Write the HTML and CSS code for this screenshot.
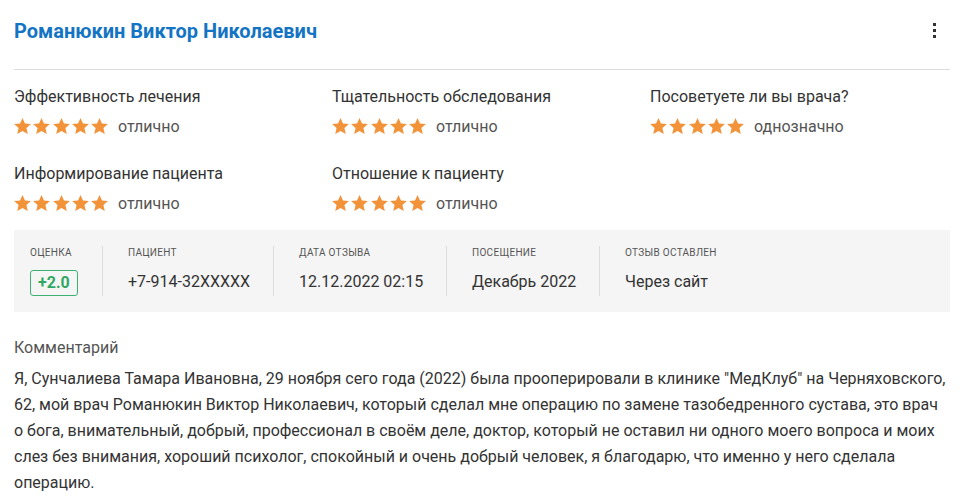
FILE: index.html
```html
<!DOCTYPE html>
<html lang="ru">
<head>
<meta charset="utf-8">
<link rel="stylesheet" href="styles.css">
</head>
<body>
<svg width="0" height="0" class="defs">
  <defs>
    <symbol id="star" viewBox="1.5 1.8 21 20">
      <path d="M12 1.8l3.1 6.9 7.4.7-5.6 5 1.7 7.4L12 17.9l-6.6 3.9 1.7-7.4-5.6-5 7.4-.7z"/>
    </symbol>
  </defs>
</svg>
<div class="review">
  <div class="header">
    <h1 class="name">Романюкин Виктор Николаевич</h1>
    <div class="kebab"><span></span><span></span><span></span></div>
  </div>

  <div class="ratings">
    <div class="rating">
      <div class="rating-label">Эффективность лечения</div>
      <div class="rating-value">
        <span class="stars"><svg><use href="#star"/></svg><svg><use href="#star"/></svg><svg><use href="#star"/></svg><svg><use href="#star"/></svg><svg><use href="#star"/></svg></span>
        <span class="rating-text">отлично</span>
      </div>
    </div>
    <div class="rating">
      <div class="rating-label">Тщательность обследования</div>
      <div class="rating-value">
        <span class="stars"><svg><use href="#star"/></svg><svg><use href="#star"/></svg><svg><use href="#star"/></svg><svg><use href="#star"/></svg><svg><use href="#star"/></svg></span>
        <span class="rating-text">отлично</span>
      </div>
    </div>
    <div class="rating">
      <div class="rating-label">Посоветуете ли вы врача?</div>
      <div class="rating-value">
        <span class="stars"><svg><use href="#star"/></svg><svg><use href="#star"/></svg><svg><use href="#star"/></svg><svg><use href="#star"/></svg><svg><use href="#star"/></svg></span>
        <span class="rating-text">однозначно</span>
      </div>
    </div>
    <div class="rating">
      <div class="rating-label">Информирование пациента</div>
      <div class="rating-value">
        <span class="stars"><svg><use href="#star"/></svg><svg><use href="#star"/></svg><svg><use href="#star"/></svg><svg><use href="#star"/></svg><svg><use href="#star"/></svg></span>
        <span class="rating-text">отлично</span>
      </div>
    </div>
    <div class="rating">
      <div class="rating-label">Отношение к пациенту</div>
      <div class="rating-value">
        <span class="stars"><svg><use href="#star"/></svg><svg><use href="#star"/></svg><svg><use href="#star"/></svg><svg><use href="#star"/></svg><svg><use href="#star"/></svg></span>
        <span class="rating-text">отлично</span>
      </div>
    </div>
  </div>

  <div class="info">
    <div class="info-item w1">
      <div class="info-label">Оценка</div>
      <div class="info-value"><span class="score">+2.0</span></div>
    </div>
    <div class="info-item w2">
      <div class="info-label">Пациент</div>
      <div class="info-value">+7-914-32XXXXX</div>
    </div>
    <div class="info-item w3">
      <div class="info-label">Дата отзыва</div>
      <div class="info-value">12.12.2022 02:15</div>
    </div>
    <div class="info-item w4">
      <div class="info-label">Посещение</div>
      <div class="info-value">Декабрь 2022</div>
    </div>
    <div class="info-item last">
      <div class="info-label">Отзыв оставлен</div>
      <div class="info-value">Через сайт</div>
    </div>
  </div>

  <div class="comment">
    <div class="comment-label">Комментарий</div>
    <p class="comment-text">Я, Сунчалиева Тамара Ивановна, 29 ноября сего года (2022) была прооперировали в клинике "МедКлуб" на Черняховского, 62, мой врач Романюкин Виктор Николаевич, который сделал мне операцию по замене тазобедренного сустава, это врач о бога, внимательный, добрый, профессионал в своём деле, доктор, который не оставил ни одного моего вопроса и моих слез без внимания, хороший психолог, спокойный и очень добрый человек, я благодарю, что именно у него сделала операцию.</p>
  </div>
</div>
</body>
</html>
```

FILE: styles.css
```css
html, body {
  margin: 0;
  padding: 0;
  background: #ffffff;
}
body {
  font-family: Roboto, "Noto Sans", "Liberation Sans", sans-serif;
  color: #333333;
}
.defs {
  position: absolute;
  width: 0;
  height: 0;
}
.review {
  padding: 0 24px 0 14px;
}
.header {
  display: flex;
  align-items: center;
  justify-content: space-between;
  height: 69px;
  border-bottom: 1px solid #dddddd;
}
.name {
  margin: 0;
  font-size: 20px;
  font-weight: 700;
  line-height: 24px;
  color: #1474c4;
  padding-bottom: 8px;
}
.kebab {
  display: flex;
  flex-direction: column;
  gap: 3px;
  width: 3px;
  margin-right: 14px;
  padding-bottom: 8px;
}
.kebab span {
  width: 3px;
  height: 3px;
  background: #333333;
}
.ratings {
  display: grid;
  grid-template-columns: 318px 318px 1fr;
  row-gap: 27px;
  padding-top: 17px;
}
.rating-label {
  font-size: 16px;
  line-height: 20px;
  color: #333333;
}
.rating-value {
  display: flex;
  align-items: center;
  margin-top: 8px;
  height: 22px;
}
.stars {
  display: flex;
  gap: 2.25px;
}
.stars svg {
  width: 17px;
  height: 16px;
  fill: #f2933a;
}
.rating-text {
  margin-left: 10px;
  font-size: 16px;
  color: #555555;
}
.info {
  display: flex;
  align-items: center;
  margin-top: 16px;
  height: 82px;
  background: #f5f5f5;
}
.info-item {
  height: 50px;
  padding-left: 25px;
  border-right: 1px solid #dddddd;
  box-sizing: border-box;
}
.info-item.w1 { width: 89px; padding-left: 16px; }
.info-item.w2 { width: 171px; }
.info-item.w3 { width: 173px; }
.info-item.w4 { width: 153px; }
.info-item.last { border-right: none; }
.info-label {
  font-size: 10px;
  line-height: 14px;
  text-transform: uppercase;
  color: #555555;
  letter-spacing: 0.3px;
}
.info-value {
  margin-top: 10px;
  font-size: 16px;
  line-height: 24px;
  color: #333333;
}
.score {
  display: inline-block;
  box-sizing: border-box;
  height: 26px;
  padding: 0 7px;
  border: 1px solid #3bb273;
  border-radius: 3px;
  color: #2fa861;
  font-weight: 700;
  font-size: 16px;
  line-height: 24px;
}
.comment {
  padding-top: 26px;
}
.comment-label {
  font-size: 16px;
  line-height: 20px;
  color: #555555;
}
.comment-text {
  margin: 8px 0 0 0;
  font-size: 16px;
  line-height: 26px;
  color: #333333;
}
```
